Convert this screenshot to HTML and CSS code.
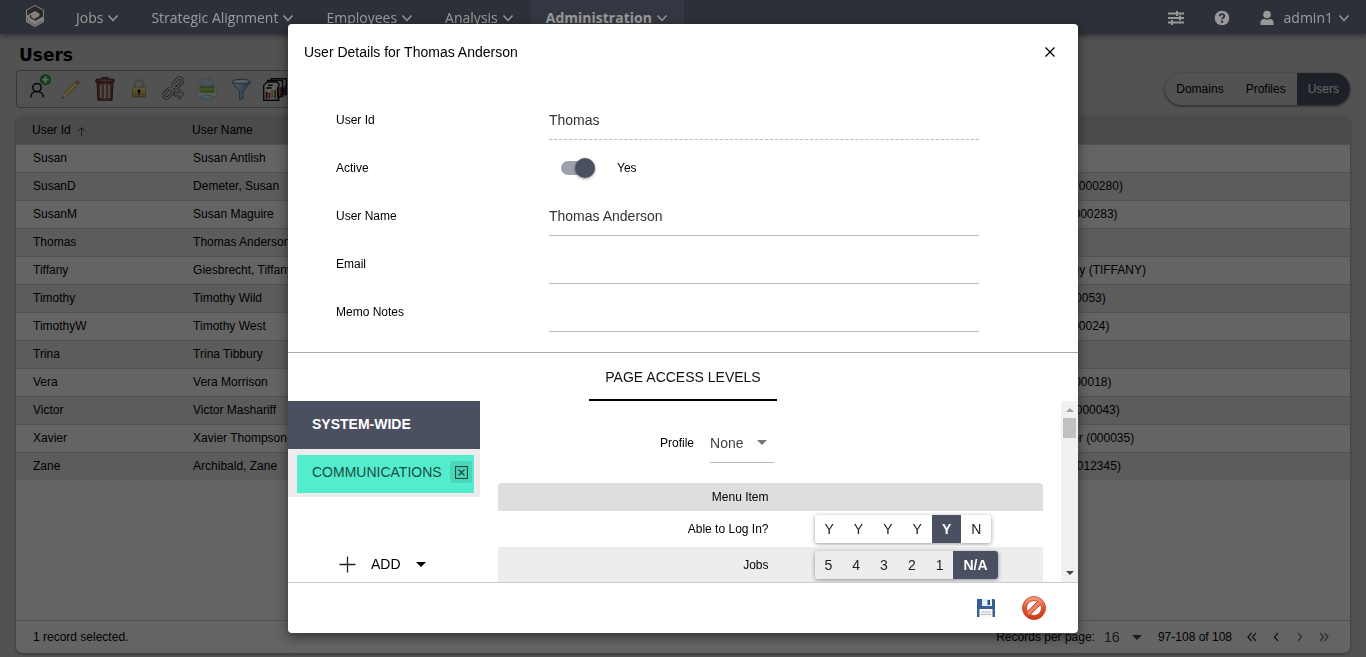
FILE: index.html
```html
<!DOCTYPE html>
<html lang="en">
<head>
<meta charset="utf-8">
<title>Users</title>
<link rel="stylesheet" href="styles.css">
</head>
<body>
<svg class="defs" width="0" height="0" aria-hidden="true">
  <symbol id="chev" viewBox="0 0 12 12"><path d="M1.500 3.500 6 8.500l4.500-5" fill="none" stroke="currentColor" stroke-width="1.500"/></symbol>
  <symbol id="caret" viewBox="0 0 10 5"><path d="M0 0h10L5 5z" fill="currentColor"/></symbol>
  <linearGradient id="gold" x2="0" y2="1"><stop offset="0" stop-color="#f2e0a4"/><stop offset="1" stop-color="#b8944a"/></linearGradient>
  <linearGradient id="blue" x2="1"><stop offset="0" stop-color="#d5ecfb"/><stop offset="1" stop-color="#4d8cc0"/></linearGradient>
  <linearGradient id="wood" x2="1"><stop offset="0" stop-color="#6d3e36"/><stop offset=".5" stop-color="#a87067"/><stop offset="1" stop-color="#6d3e36"/></linearGradient>
  <linearGradient id="red" x2="0" y2="1"><stop offset="0" stop-color="#f6a58c"/><stop offset=".5" stop-color="#e4532c"/><stop offset="1" stop-color="#c93a18"/></linearGradient>
</svg>

<header class="topbar">
  <a class="logo" href="#" aria-label="Home">
    <svg width="20" height="22" viewBox="0 0 20 22">
      <path d="M10 0 19 5v12l-9 5-9-5V5z" fill="#d8d8d8"/>
      <path d="M10 1 18 5.500v6L10 16v-2.500l4.500-2.500V8.500L10 6 5.500 8.500 2 10.500v-5z" fill="#4a4238"/>
      <path d="M5.500 10.500 10 8l3.500 1.800L10 11.800z" fill="#d8d8d8"/>
      <path d="M5.500 10v2.500L10 15" fill="none" stroke="#4a4238" stroke-width="1.200"/>
      <path d="M2.500 12.500v3.500l7.500 4 7.500-4" fill="none" stroke="#9a9a9a"/>
    </svg>
  </a>
  <nav class="nav">
    <button class="nav-item">Jobs <svg><use href="#chev"/></svg></button>
    <button class="nav-item">Strategic Alignment <svg><use href="#chev"/></svg></button>
    <button class="nav-item">Employees <svg><use href="#chev"/></svg></button>
    <button class="nav-item">Analysis <svg><use href="#chev"/></svg></button>
    <button class="nav-item nav-item-current">Administration <svg><use href="#chev"/></svg></button>
  </nav>
  <div class="nav-tools">
    <button class="icon-button" aria-label="Settings">
      <svg width="16" height="14" viewBox="0 0 16 14" fill="none" stroke="#fff" stroke-width="1.800"><path d="M0 2.500h16M0 7h16M0 11.500h16"/><path d="M9 0v5M12 4.500v5M4 9v5" stroke-width="2"/></svg>
    </button>
    <button class="icon-button" aria-label="Help">
      <svg width="16" height="16" viewBox="0 0 16 16"><circle cx="8" cy="8" r="7.300" fill="#fff"/><path d="M5.700 6.200C5.800 3.300 10.300 3.400 10.300 6c0 1.700-2.200 1.700-2.200 3.300" fill="none" stroke="#4a5060" stroke-width="1.800"/><circle cx="8.100" cy="11.700" r="1.200" fill="#4a5060"/></svg>
    </button>
    <button class="account">
      <svg class="person" viewBox="0 0 14 16"><circle cx="7" cy="4.500" r="3.800" fill="#fff"/><path d="M.5 15v-2.500C.5 9.500 3 9 4.500 9c1.500 1 3.500 1 5 0 1.500 0 4 .5 4 3.500V15z" fill="#fff"/></svg>
      admin1 <svg class="chev"><use href="#chev"/></svg>
    </button>
  </div>
</header>

<main class="page">
  <h1 class="page-title">Users</h1>
  <div class="page-tools">
    <div class="toolbar">
      <button class="tool" aria-label="Add user"><svg viewBox="0 0 32 32"><circle cx="16" cy="14.500" r="4.500" fill="none" stroke="#111" stroke-width="1.600"/><path d="M9.500 25v-1c0-7 13-7 13 0v1" fill="none" stroke="#111" stroke-width="1.600"/><circle cx="25" cy="6" r="6" fill="#2f9a32"/><path d="M25 2.500v7M21.500 6h7" stroke="#fff" stroke-width="2"/></svg></button>
      <button class="tool" aria-label="Edit"><svg viewBox="0 0 32 32"><path d="m7.500 25 1.500-5L20.500 8.500l3 3L12 23z" fill="#e8cd62" stroke="#a98a35" stroke-width=".7"/><path d="m9 20 3 3-4.500 2z" fill="#ead5b0"/><path d="m20.500 8.500 2-2 3 3-2 2z" fill="#c9727a"/><path d="m6.500 26 2-.8-1.200-1.200z" fill="#222"/><path d="M11 21 21.500 10.500" stroke="#fff1b0"/></svg></button>
      <button class="tool" aria-label="Delete"><svg viewBox="0 0 32 32"><path d="M7.500 9h17l-1 19h-15z" fill="url(#wood)" stroke="#4b2420"/><path d="M11.500 11.500v14M16 11.500v14M20.500 11.500v14" stroke="#d5cac8" stroke-width="1.800"/><path d="M13 5.500V4h6v1.500" fill="none" stroke="#5b2f29" stroke-width="1.500"/><rect x="6" y="5.500" width="20" height="3.500" rx="1.500" fill="url(#wood)" stroke="#4b2420"/></svg></button>
      <button class="tool" aria-label="Lock"><svg viewBox="0 0 32 32"><path d="M11.500 15V11c0-6 9-6 9 0v4" fill="none" stroke="#aaa" stroke-width="2"/><rect x="9" y="14" width="14" height="10.500" rx="1" fill="url(#gold)" stroke="#9c7a2d" stroke-width=".7"/><circle cx="16" cy="18" r="1.500"/><path d="M15.300 18h1.400v4h-1.400z"/></svg></button>
      <button class="tool" aria-label="Link"><svg viewBox="0 0 32 32" fill="none"><g stroke="#555" stroke-width="3.600"><rect x="15" y="6.500" width="12" height="6" rx="3" transform="rotate(-48 21 9.500)"/><rect x="5" y="17.500" width="12" height="6" rx="3" transform="rotate(-48 11 20.500)"/><path d="m13 18 6-7"/></g><g stroke="#c9c9c9" stroke-width="1.800"><rect x="15" y="6.500" width="12" height="6" rx="3" transform="rotate(-48 21 9.500)"/><rect x="5" y="17.500" width="12" height="6" rx="3" transform="rotate(-48 11 20.500)"/><path d="m13 18 6-7"/></g><path d="M17 19.500h5.500V16l5.500 5.500-5.500 5.500v-3.500H17z" fill="#bbb" stroke="#666"/></svg></button>
      <button class="tool" aria-label="Print"><svg viewBox="0 0 32 32"><path d="M10.500 5h11v9h-11z" fill="#b7d2e8" stroke="#86a7c1" stroke-width=".7"/><rect x="5.500" y="12.500" width="21" height="12" rx="2" fill="#e4e4e4" stroke="#999" stroke-width=".7"/><path d="M8 13h16v7H8z" fill="#86a84a"/><path d="M8 15h16v3H8z" fill="#a9c56e"/><path d="M11 22.500h10v4.500H11z" fill="#b9def5" stroke="#7eadca" stroke-width=".7"/></svg></button>
      <button class="tool" aria-label="Filter"><svg viewBox="0 0 32 32"><path d="M6.500 8.500 14.500 19v8.500L18 26v-7l8-10.500z" fill="url(#blue)" stroke="#376f9b"/><ellipse cx="16.200" cy="8" rx="9.800" ry="2.300" fill="#d9edf8" stroke="#376f9b"/></svg></button>
      <button class="tool" aria-label="Reports"><svg viewBox="0 0 32 32" stroke="#111" stroke-width="1.500"><path d="M12 5h16v17H12z" fill="#ccc"/><path d="M8 7h16v17H8z" fill="#ddd"/><path d="M8 8.500h10l2 2V28H4V12z" fill="#eee"/><path d="M8.500 12h5M6.500 15h6" /><g stroke-width="2"><path d="M7 26v-7M25 22v-8" stroke="#222"/><path d="M10 26v-6" stroke="#a22"/><path d="M13 26v-9" stroke="#bfa32b"/><path d="M16 26v-9" stroke="#387a45"/><path d="M19 26V14" stroke="#222"/><path d="M22.500 24V14" stroke="#7d2020"/><path d="M27 21v-9" stroke="#23237a"/></g></svg></button>
    </div>
    <div class="pills">
      <button class="pill">Domains</button>
      <button class="pill">Profiles</button>
      <button class="pill pill-current">Users</button>
    </div>
  </div>

  <section class="grid-panel">
    <table class="users">
      <colgroup><col class="col-id"><col class="col-name"><col></colgroup>
      <thead><tr><th>User Id <svg width="9" height="9" viewBox="0 0 9 9" fill="none" stroke="currentColor"><path d="M4.500 9V1M.5 4.500l4-4 4 4"/></svg></th><th>User Name</th><th>Employee</th></tr></thead>
      <tbody>
        <tr><td>Susan</td><td>Susan Antlish</td><td></td></tr>
        <tr><td>SusanD</td><td>Demeter, Susan</td><td>Demeter, Susan (000280)</td></tr>
        <tr><td>SusanM</td><td>Susan Maguire</td><td>Susan Maguire (000283)</td></tr>
        <tr class="selected"><td>Thomas</td><td>Thomas Anderson</td><td></td></tr>
        <tr><td>Tiffany</td><td>Giesbrecht, Tiffany</td><td>Giesbrecht, Tiffany (TIFFANY)</td></tr>
        <tr><td>Timothy</td><td>Timothy Wild</td><td>Timothy Wild (000053)</td></tr>
        <tr><td>TimothyW</td><td>Timothy West</td><td>Timothy West (000024)</td></tr>
        <tr><td>Trina</td><td>Trina Tibbury</td><td></td></tr>
        <tr><td>Vera</td><td>Vera Morrison</td><td>Vera Morrison (000018)</td></tr>
        <tr><td>Victor</td><td>Victor Mashariff</td><td>Victor Mashariff (000043)</td></tr>
        <tr><td>Xavier</td><td>Xavier Thompson</td><td>Thompson, Xavier (000035)</td></tr>
        <tr><td>Zane</td><td>Archibald, Zane</td><td>Archibald, Zane (012345)</td></tr>
      </tbody>
    </table>
    <footer class="grid-footer">
      <span>1 record selected.</span>
      <div class="pager">
        <label for="per-page">Records per page:</label>
        <span class="select select-page"><select id="per-page"><option>16</option></select><svg><use href="#caret"/></svg></span>
        <span class="range">97-108 of 108</span>
        <button class="page-button" aria-label="First page"><svg viewBox="0 0 12 12"><path d="M5.500 2 2 6l3.500 4M10 2 6.500 6l3.500 4"/></svg></button>
        <button class="page-button" aria-label="Previous page"><svg viewBox="0 0 12 12"><path d="M8 2 4.500 6 8 10"/></svg></button>
        <button class="page-button" aria-label="Next page" disabled><svg viewBox="0 0 12 12"><path d="M4 2l3.500 4L4 10"/></svg></button>
        <button class="page-button" aria-label="Last page" disabled><svg viewBox="0 0 12 12"><path d="M2 2l3.500 4L2 10M6.500 2 10 6l-3.500 4"/></svg></button>
      </div>
    </footer>
  </section>
</main>

<div class="backdrop"></div>
<div class="dialog-layer">
  <section class="dialog" role="dialog" aria-labelledby="dialog-title">
    <header class="dialog-header">
      <h2 id="dialog-title">User Details for Thomas Anderson</h2>
      <button class="close" aria-label="Close"><svg width="10" height="10" viewBox="0 0 10 10"><path d="m.5.5 9 9m0-9-9 9" stroke="#000" stroke-width="1.300"/></svg></button>
    </header>
    <form class="details">
      <div class="field"><label for="user-id">User Id</label><input class="text readonly" id="user-id" value="Thomas" readonly></div>
      <div class="field"><label for="active">Active</label><div class="switch-row"><input class="switch" type="checkbox" id="active" checked><span>Yes</span></div></div>
      <div class="field"><label for="user-name">User Name</label><input class="text" id="user-name" value="Thomas Anderson"></div>
      <div class="field"><label for="email">Email</label><input class="text" id="email"></div>
      <div class="field"><label for="memo">Memo Notes</label><input class="text" id="memo"></div>
    </form>
    <div class="tabs"><button class="tab">PAGE ACCESS LEVELS</button></div>
    <div class="access">
      <aside class="scopes">
        <button class="scope scope-current">SYSTEM-WIDE</button>
        <div class="scope-slot">
          <div class="chip"><button class="chip-name">COMMUNICATIONS</button><button class="chip-remove" aria-label="Remove"><svg width="13" height="13" viewBox="0 0 13 13" fill="none" stroke="currentColor"><rect x=".5" y=".5" width="12" height="12" stroke-width="1.200"/><path d="m3.500 3.500 6 6m0-6-6 6" stroke-width="1.300"/></svg></button></div>
        </div>
        <button class="add"><svg width="17" height="17" viewBox="0 0 17 17"><path d="M8.500.5v16M.5 8.500h16" stroke="#222" stroke-width="1.300"/></svg><span>ADD</span><svg class="caret"><use href="#caret"/></svg></button>
      </aside>
      <div class="levels">
        <div class="profile">
          <label for="profile">Profile</label>
          <span class="select select-profile"><select id="profile"><option>None</option></select><svg><use href="#caret"/></svg></span>
        </div>
        <table class="menu-levels">
          <thead><tr><th>Menu Item</th><th></th></tr></thead>
          <tbody>
            <tr><td>Able to Log In?</td><td><div class="group"><button>Y</button><button>Y</button><button>Y</button><button>Y</button><button class="on">Y</button><button>N</button></div></td></tr>
            <tr><td>Jobs</td><td><div class="group"><button>5</button><button>4</button><button>3</button><button>2</button><button>1</button><button class="on">N/A</button></div></td></tr>
          </tbody>
        </table>
      </div>
      <div class="scrollbar" aria-hidden="true"><svg class="up"><use href="#caret"/></svg><i class="thumb"></i><svg class="down"><use href="#caret"/></svg></div>
    </div>
    <footer class="dialog-footer">
      <button aria-label="Save"><svg viewBox="0 0 24 24"><path d="M3 3h17l1 1v17H3z" fill="#35608f"/><path d="M8 3h10v7H8z" fill="#e7edf4"/><path d="M13.500 4H16v5h-2.500z" fill="#27507e"/><path d="M5.500 13h13v8.500H5.500z" fill="#fafafa"/><path d="M7 16h10M7 18.500h10" stroke="#b5b5b5"/></svg></button>
      <button aria-label="Cancel"><svg viewBox="0 0 24 24"><circle cx="12" cy="12" r="11.500" fill="url(#red)" stroke="#bd3c1c" stroke-width=".8"/><circle cx="12" cy="12" r="7.500" fill="#fff" stroke="#bd3c1c" stroke-width=".8"/><path d="M6.500 17.500l11-11" stroke="#bd3c1c" stroke-width="4.600"/><path d="M6 18 18 6" stroke="#ee8163" stroke-width="3.200"/></svg></button>
    </footer>
  </section>
</div>
</body>
</html>
```

FILE: styles.css
```css
* { box-sizing: border-box; }
body { margin: 0; height: 100vh; display: flex; flex-direction: column; background: #cdcdcd; color: #000; font: 12px/16px "Liberation Sans", Arial, sans-serif; }
button, input, select { font: inherit; color: inherit; border: 0; margin: 0; padding: 0; background: none; border-radius: 0; outline: 0; }
h1, h2 { margin: 0; }
svg { display: block; flex: none; }
.defs { position: absolute; }

/* Top bar */
.topbar { position: relative; z-index: 2; height: 34px; flex: none; display: flex; background: #4a5060; color: #fff; font: 14px/20px "Open Sans", sans-serif; box-shadow: 0 2px 5px rgba(0, 0, 0, .4); }
.topbar::after { content: ""; position: absolute; inset: 0; background: rgba(0, 0, 0, .4); pointer-events: none; }
.logo { width: 60px; padding: 5px 0 0 25px; }
.nav { display: flex; }
.nav-item { display: flex; align-items: center; gap: 4px; padding: 1px 16px 0; }
.nav-item svg, .account .chev { width: 12px; height: 12px; }
.nav-item-current { background: #555c6d; font-weight: bold; }
.nav-tools { margin-left: auto; display: flex; align-items: center; gap: 30px; padding: 2px 16px 0 0; }
.account { display: flex; align-items: center; gap: 5px; }
.person { width: 14px; height: 16px; margin-right: 5px; }

/* Page */
.page { flex: 1; display: flex; flex-direction: column; padding: 8px 16px 4px; min-height: 0; }
.page-title { padding: 0 3px; font: bold 17px/26px "DejaVu Sans", Verdana, sans-serif; }
.page-tools { display: flex; align-items: center; justify-content: space-between; margin: 2px 0 8px; }
.toolbar { display: flex; align-items: center; height: 38px; padding: 0 3px; border: 1px solid #888; border-radius: 4px; }
.tool { width: 34px; height: 34px; display: grid; place-items: center; }
.tool svg { width: 30px; height: 30px; }
.pills { display: flex; height: 32px; border-radius: 16px; overflow: hidden; box-shadow: 0 1px 3px rgba(0, 0, 0, .6); }
.pill { padding: 0 11px; }
.pill-current { background: #4a5060; color: #fff; }
.grid-panel { flex: 1; display: flex; flex-direction: column; background: #fafafa; border-radius: 6px; overflow: hidden; box-shadow: 0 1px 3px rgba(0, 0, 0, .4); }
.users { width: 100%; table-layout: fixed; border-collapse: collapse; }
.col-id { width: 12%; }
.col-name { width: 59.4%; }
.users th { height: 28px; padding: 0 16px; background: #bbb; text-align: left; font-weight: normal; }
.users th svg { display: inline-block; margin-left: 3px; vertical-align: -2px; color: #444; }
.users td { height: 28px; padding: 0 17px; border-top: 1px solid #ccc; white-space: nowrap; }
.users tbody tr:nth-child(even) { background: #e6e6e6; }
.users tbody .selected { background: #bfbfbf; }
.grid-footer { margin-top: auto; height: 33px; padding: 0 14px 0 17px; display: flex; align-items: center; justify-content: space-between; border-top: 1px solid #ccc; }
.pager { display: flex; align-items: center; }
.range { margin: 0 8px 0 16px; }
.page-button { width: 24px; height: 24px; display: grid; place-items: center; color: #333; }
.page-button:disabled { color: #777; }
.page-button svg { width: 12px; height: 12px; fill: none; stroke: currentColor; stroke-width: 1.3; }

/* Drop-downs */
.select { display: grid; align-items: center; color: #444; font-size: 14px; }
.select select, .select svg { grid-area: 1 / 1; }
.select select { appearance: none; width: 100%; }
.select svg { width: 10px; height: 5px; justify-self: end; pointer-events: none; }
.select-page { width: 38px; margin-left: 9px; }
.select-profile { width: 64px; height: 40px; border-bottom: 1px solid #bbb; }
.select-profile svg { margin-right: 7px; color: #777; }

/* Dialog */
.backdrop { position: fixed; inset: 0; z-index: 1; background: rgba(0, 0, 0, .6); }
.dialog-layer { position: fixed; inset: 0; z-index: 3; display: grid; place-items: center; }
.dialog { width: 100%; max-width: 790px; background: #fff; border-radius: 4px; overflow: hidden; box-shadow: 0 4px 12px rgba(0, 0, 0, .5); }
.dialog-header { display: flex; align-items: center; justify-content: space-between; height: 56px; padding: 0 16px; }
.dialog-header h2 { font-size: 14px; font-weight: normal; }
.close { width: 24px; height: 24px; display: grid; place-items: center; }
.details { padding: 16px 99px 16px 48px; border-bottom: 1px solid #aaa; }
.field { display: grid; grid-template-columns: 213px 1fr; align-items: center; height: 48px; }
.text { width: 100%; height: 40px; border-bottom: 1px solid #bbb; font-size: 14px; color: #333; }
.readonly { border-bottom-style: dashed; }
.switch-row { display: flex; align-items: center; gap: 22px; padding-left: 12px; }
.switch { appearance: none; position: relative; width: 34px; height: 20px; }
.switch::before { content: ""; position: absolute; inset: 3px 0; border-radius: 7px; background: #9da1ab; }
.switch::after { content: ""; position: absolute; top: 0; right: 0; width: 20px; height: 20px; border-radius: 50%; background: #4a5060; box-shadow: 0 1px 3px rgba(0, 0, 0, .4); }
.tabs { display: flex; justify-content: center; height: 48px; }
.tab { padding: 2px 16px 0; border-bottom: 2px solid #000; font-size: 14px; color: #111; }
.access { display: flex; height: 181px; overflow: hidden; }
.scopes { width: 192px; display: flex; flex-direction: column; }
.scope { height: 48px; flex: none; padding: 0 24px 2px; text-align: left; font-size: 14px; }
.scope-current { background: #4a5060; color: #fff; font-weight: bold; }
.scope-slot { height: 48px; flex: none; padding: 6px 6px 4px 9px; background: #ececec; }
.chip { height: 38px; display: flex; align-items: center; justify-content: space-between; padding: 0 2px 4px 15px; background: #53edcd; font-size: 14px; color: #1b4b41; }
.chip-remove { width: 22px; height: 22px; display: grid; place-items: center; border-radius: 3px; background: #4bd6b9; }
.add { margin-top: auto; height: 36px; padding: 0 51px; display: flex; align-items: center; gap: 15px; font-size: 14px; }
.add .caret { width: 10px; height: 5px; }
.levels { flex: 1; padding: 22px 18px 0; }
.profile { display: flex; align-items: center; gap: 16px; margin: 0 0 20px 162px; }
.menu-levels { width: 100%; table-layout: fixed; border-collapse: collapse; }
.menu-levels th { height: 28px; padding: 0 2px 0 0; background: #dedede; text-align: right; font-weight: normal; }
.menu-levels th:first-child { border-top-left-radius: 4px; }
.menu-levels th:last-child { border-top-right-radius: 4px; }
.menu-levels td { height: 36px; padding: 0 2px 0 0; text-align: right; }
.menu-levels td:last-child { padding-left: 44px; text-align: left; }
.menu-levels tbody tr:nth-child(even) { background: #ededed; }
.group { display: inline-flex; height: 28px; vertical-align: middle; border-radius: 3px; overflow: hidden; box-shadow: 0 1px 4px rgba(0, 0, 0, .4); }
.group button { padding: 0 10px; font-size: 14px; color: #222; }
.group .on { background: #4a5060; color: #fff; font-weight: bold; }
.scrollbar { width: 17px; display: flex; flex-direction: column; align-items: center; background: #f1f1f1; }
.scrollbar svg { width: 8px; height: 4px; }
.scrollbar .up { margin: 7px 0 6px; color: #a0a0a0; transform: rotate(180deg); }
.thumb { width: 13px; height: 20px; background: #c1c1c1; }
.scrollbar .down { margin: auto 0 7px; color: #444; }
.dialog-footer { display: flex; justify-content: flex-end; align-items: center; gap: 24px; height: 51px; padding: 0 32px; border-top: 1px solid #ccc; }
.dialog-footer svg { width: 24px; height: 24px; }
```
